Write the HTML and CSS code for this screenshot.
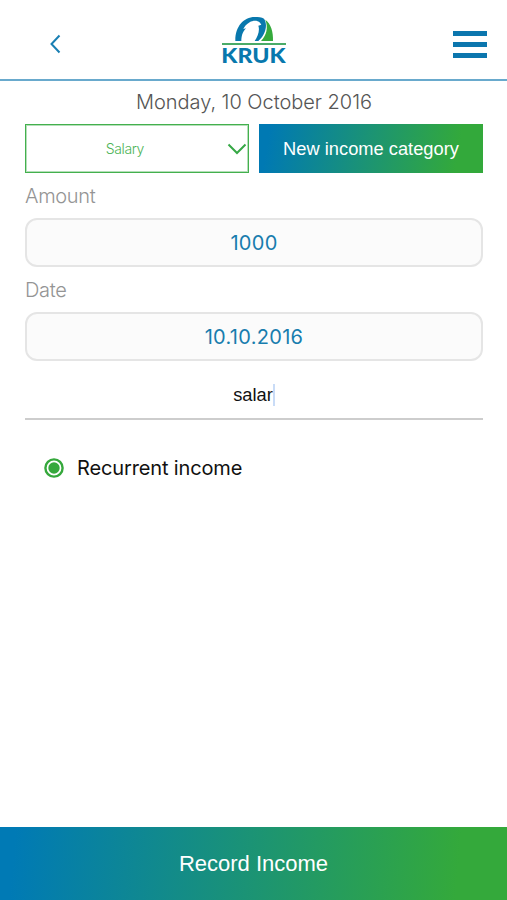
FILE: index.html
```html
<!DOCTYPE html>
<html lang="en">
<head>
<meta charset="utf-8">
<title>Record income</title>
<link rel="stylesheet" href="styles.css">
</head>
<body>
<header class="header">
  <a class="back" aria-label="Back"><svg width="12" height="20" viewBox="0 0 12 20"><path d="M10.500 1.500L2.500 10l8 8.500"/></svg></a>
  <svg class="logo" width="90" height="60" viewBox="0 0 270 180">
    <path fill="#0878ad" d="M76 99C75 57 100 27 134 27C145 27 155 28 162 32C171 44 169 65 161 79C157 87 151 94 145 99H134C144 85 150 67 145 53L154 50L150 44C141 36 128 38 119 43C110 48 103 56 100 63L108 61C97 72 94 86 94 99Z"/>
    <path fill="#35aa3c" d="M166 35C183 48 190 71 189 99H153C170 81 175 59 166 35Z"/>
    <path fill="#4aab68" d="M36 105H228V111H36Z"/>
    <text class="brand" x="34" y="164" textLength="193" lengthAdjust="spacingAndGlyphs">KRUK</text>
  </svg>
  <a class="menu" aria-label="Menu"><i></i><i></i><i></i></a>
</header>
<main class="main">
  <h1 class="today"><span>Monday, 10 October 2016</span></h1>
  <div class="actions">
    <div class="select"><span>Salary</span><svg class="chevron" width="20" height="12" viewBox="0 0 20 12"><path d="M1.500 1.500L10 10l8.500-8.500"/></svg></div>
    <button class="new">New income category</button>
  </div>
  <div class="label">Amount</div>
  <div class="field">1000</div>
  <div class="label">Date</div>
  <div class="field day">10.10.2016</div>
  <div class="note"><span>salar</span><i class="caret"></i></div>
  <div class="option"><svg width="20" height="20" viewBox="0 0 20 20"><circle class="ring" cx="10" cy="10" r="8.600"/><circle class="dot" cx="10" cy="10" r="5.700"/></svg><span>Recurrent income</span></div>
</main>
<button class="submit">Record Income</button>
</body>
</html>
```
FILE: styles.css
```css
* { box-sizing: border-box; }
body {
  margin: 0;
  height: 900px;
  display: flex;
  flex-direction: column;
  background: #fff;
  font-family: "Liberation Sans", sans-serif;
}
button { border: 0; padding: 0; font-family: inherit; color: #fff; }
.header {
  height: 81px;
  padding: 0 20px 0 49px;
  display: grid;
  grid-template-columns: 161px 90px 1fr;
  border-bottom: 2px solid #69aacd;
}
.back { padding-top: 34px; }
.back svg { display: block; }
.back path { fill: none; stroke: #197fb3; stroke-width: 2; }
.logo { display: block; margin-top: 8px; }
.brand { font: 900 62px Lato, sans-serif; fill: #0878ad; }
.menu {
  justify-self: end;
  width: 34px;
  padding-top: 31px;
  display: flex;
  flex-direction: column;
  gap: 6px;
}
.menu i { height: 5px; background: #0c76ae; }
.main { flex: 1; padding: 0 24px 0 25px; }
.today {
  margin: 0;
  height: 43px;
  text-align: center;
  font: 300 20px/43px Inter, sans-serif;
  letter-spacing: -0.03px;
  color: #555;
}
.actions { display: grid; grid-template-columns: 224px 224px; gap: 10px; height: 49px; }
.select {
  border: 1px solid #43b04e;
  outline: 1px solid #b5dfb9;
  outline-offset: -2px;
  display: flex;
  align-items: center;
  justify-content: flex-end;
  padding-right: 1px;
  font: 300 14px Inter, sans-serif;
  letter-spacing: -0.4px;
  color: #4eb457;
}
.select span { margin-right: 83px; }
.chevron path { fill: none; stroke: #36a846; stroke-width: 2; }
.new {
  background: linear-gradient(100deg, #0079b3 5%, #1b9375 48%, #33a93b 88%);
  font-size: 18.300px;
}
.label {
  height: 45px;
  font: 300 20px/47px Inter, sans-serif;
  letter-spacing: -0.3px;
  color: #949494;
}
.field {
  height: 49px;
  border: 2px solid #e5e5e5;
  border-radius: 12px;
  background: #fbfbfb;
  text-align: center;
  font: 400 20px/46px Inter, sans-serif;
  letter-spacing: 0.3px;
  color: #187dae;
}
.note {
  height: 59px;
  border-bottom: 2px solid #cdcdcd;
  display: flex;
  justify-content: center;
  align-items: center;
  padding-top: 11px;
  font-size: 18.300px;
  color: #111;
}
.caret { width: 2px; height: 22px; background: #c9dcf7; }
.option {
  margin: 36px 0 0 19px;
  display: flex;
  align-items: center;
  gap: 13px;
  font: 400 20px/24px Inter, sans-serif;
  letter-spacing: -0.14px;
  color: #111;
}
.ring { fill: none; stroke: #35a83c; stroke-width: 2.400; }
.dot { fill: #35a83c; }
.submit {
  height: 73px;
  background: linear-gradient(95deg, #007ab5 3%, #1b9375 49%, #34a93b 90%);
  font-size: 22px;
}
```
